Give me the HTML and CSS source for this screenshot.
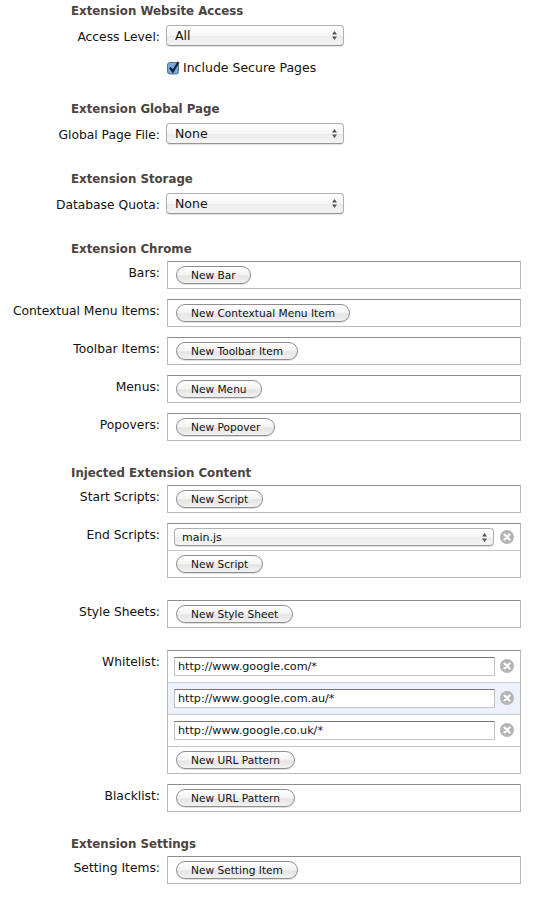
FILE: index.html
```html
<!DOCTYPE html>
<html lang="en">
<head>
  <meta charset="UTF-8">
  <meta name="viewport" content="width=device-width, initial-scale=1.0">
  <title>Extension Builder</title>
  <link rel="stylesheet" href="styles.css">
</head>
<body>
  <svg width="0" height="0" class="defs">
    <symbol id="arrows" viewBox="0 0 5 11">
      <path d="M2.5 1 L5 4.5 H0 Z M2.5 10 L0 6.5 H5 Z" fill="#555"/>
    </symbol>
    <symbol id="remove" viewBox="0 0 14 14">
      <circle cx="7" cy="7" r="7" fill="#b4b4b4"/>
      <path d="M4.5 4.5 L9.5 9.5 M9.5 4.5 L4.5 9.5" stroke="#fff" stroke-width="2.2" stroke-linecap="round"/>
    </symbol>
  </svg>

  <section class="group group-access">
    <h2 class="select-title">Extension Website Access</h2>
    <div class="row">
      <label>Access Level:</label>
      <div class="select select-short"><span>All</span><svg class="arrows"><use href="#arrows"/></svg></div>
    </div>
    <div class="check-row">
      <svg class="checkbox" viewBox="0 0 14 14">
        <rect x="0.5" y="1.5" width="11" height="11.5" rx="2.5" fill="#7ea6d8" stroke="#55728f"/>
        <path d="M3 6.5 L5.8 10.5 L11.5 1" fill="none" stroke="#10233a" stroke-width="2.2"/>
      </svg>
      <span>Include Secure Pages</span>
    </div>
  </section>

  <section class="group group-select">
    <h2 class="select-title">Extension Global Page</h2>
    <div class="row">
      <label>Global Page File:</label>
      <div class="select select-short"><span>None</span><svg class="arrows"><use href="#arrows"/></svg></div>
    </div>
  </section>

  <section class="group group-select">
    <h2 class="select-title">Extension Storage</h2>
    <div class="row">
      <label>Database Quota:</label>
      <div class="select select-short"><span>None</span><svg class="arrows"><use href="#arrows"/></svg></div>
    </div>
  </section>

  <section class="group">
    <h2>Extension Chrome</h2>
    <div class="row"><label>Bars:</label><div class="box"><div class="box-row"><button>New Bar</button></div></div></div>
    <div class="row"><label>Contextual Menu Items:</label><div class="box"><div class="box-row"><button>New Contextual Menu Item</button></div></div></div>
    <div class="row"><label>Toolbar Items:</label><div class="box"><div class="box-row"><button>New Toolbar Item</button></div></div></div>
    <div class="row"><label>Menus:</label><div class="box"><div class="box-row"><button>New Menu</button></div></div></div>
    <div class="row"><label>Popovers:</label><div class="box"><div class="box-row"><button>New Popover</button></div></div></div>
  </section>

  <section class="group">
    <h2>Injected Extension Content</h2>
    <div class="row"><label>Start Scripts:</label><div class="box"><div class="box-row"><button>New Script</button></div></div></div>
    <div class="row">
      <label>End Scripts:</label>
      <div class="box">
        <div class="box-row item-row">
          <div class="select select-wide"><span>main.js</span><svg class="arrows"><use href="#arrows"/></svg></div>
          <svg class="remove"><use href="#remove"/></svg>
        </div>
        <div class="box-row"><button>New Script</button></div>
      </div>
    </div>
    <div class="row row-apart"><label>Style Sheets:</label><div class="box"><div class="box-row"><button>New Style Sheet</button></div></div></div>
    <div class="row row-apart">
      <label>Whitelist:</label>
      <div class="box">
        <div class="box-row url-row">
          <input type="text" value="http://www.google.com/*">
          <svg class="remove"><use href="#remove"/></svg>
        </div>
        <div class="box-row url-row selected">
          <input type="text" value="http://www.google.com.au/*">
          <svg class="remove"><use href="#remove"/></svg>
        </div>
        <div class="box-row url-row">
          <input type="text" value="http://www.google.co.uk/*">
          <svg class="remove"><use href="#remove"/></svg>
        </div>
        <div class="box-row"><button>New URL Pattern</button></div>
      </div>
    </div>
    <div class="row"><label>Blacklist:</label><div class="box"><div class="box-row"><button>New URL Pattern</button></div></div></div>
  </section>

  <section class="group">
    <h2>Extension Settings</h2>
    <div class="row"><label>Setting Items:</label><div class="box"><div class="box-row"><button>New Setting Item</button></div></div></div>
  </section>
</body>
</html>
```

FILE: styles.css
```css
body {
  font-family: "DejaVu Sans", Verdana, sans-serif;
  font-size: 12.5px;
  color: #111;
  background-color: white;
  margin: 0;
  padding: 4px 0 0 0;
  overflow: hidden;
}

.defs {
  position: absolute;
}

h2 {
  font-size: 11.8px;
  line-height: 15px;
  font-weight: bold;
  color: #4a4442;
  margin: 0 0 4px 71px;
}

.select-title {
  margin-bottom: 6px;
}

.group {
  margin-bottom: 25px;
}

.group-access {
  margin-bottom: 27px;
}

.group-select {
  margin-bottom: 28px;
}

.row {
  display: flex;
  margin-bottom: 10px;
}

.row-apart {
  margin-top: 22px;
}

.group .row:last-child {
  margin-bottom: 0;
}

label {
  width: 160px;
  flex-shrink: 0;
  font-size: 12.3px;
  text-align: right;
  line-height: 15px;
  padding-top: 5px;
  margin-right: 7px;
}

.select {
  display: flex;
  align-items: center;
  justify-content: space-between;
  box-sizing: border-box;
  height: 21px;
  border: 1px solid #b0b0b0;
  border-bottom-color: #959595;
  border-radius: 4px;
  background: linear-gradient(#ffffff, #f6f6f6 50%, #ececec 55%, #f4f4f4);
  box-shadow: 0 1px 1px rgba(0, 0, 0, 0.12);
  padding: 0 6px 0 8px;
}

.select-short {
  width: 178px;
  margin-left: -1px;
}

.select-wide {
  width: 320px;
  height: 18px;
  font-size: 11px;
  padding-left: 7px;
}

.arrows {
  width: 5px;
  height: 11px;
}

.check-row {
  display: flex;
  align-items: center;
  margin: 14px 0 0 167px;
  line-height: 15px;
}

.checkbox {
  width: 14px;
  height: 14px;
  margin-right: 2px;
}

.box {
  box-sizing: border-box;
  width: 354px;
  border: 1px solid #b8b8b8;
  border-top-color: #8c8c8c;
}

.box-row {
  display: flex;
  align-items: center;
  box-sizing: border-box;
  height: 26px;
  padding-left: 8px;
}

.item-row {
  height: 27px;
  padding-left: 6px;
  border-bottom: 1px solid #c8c8c8;
}

.url-row {
  height: 32px;
  padding-left: 6px;
  border-bottom: 1px solid #c8c8c8;
}

.selected {
  background-color: #edf1fb;
}

button {
  font-family: inherit;
  font-size: 10.6px;
  height: 18px;
  padding: 0 14px;
  color: #111;
  border: 1px solid #8f8f8f;
  border-radius: 9px;
  background: linear-gradient(#ffffff, #f3f3f3 50%, #e4e4e4 55%, #f2f2f2);
  box-shadow: 0 1px 0 rgba(0, 0, 0, 0.12);
}

input {
  font-family: inherit;
  font-size: 11.2px;
  box-sizing: border-box;
  width: 321px;
  height: 19px;
  padding: 0 3px;
  color: #111;
  border: 1px solid #c4c4c4;
  border-top-color: #777;
  outline: none;
}

.remove {
  width: 14px;
  height: 14px;
  margin-left: 5px;
}

.url-row .remove {
  margin-bottom: 2px;
}

.select-wide + .remove {
  margin-left: 6px;
}
```
